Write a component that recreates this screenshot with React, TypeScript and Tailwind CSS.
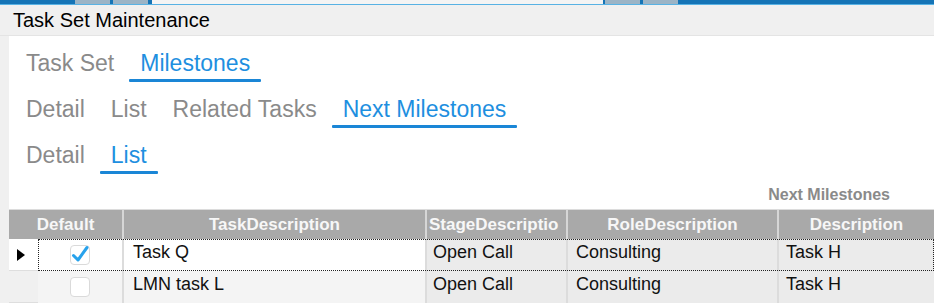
type Row = { def: boolean; task: string; stage: string; role: string; desc: string };

const rows: Row[] = [
  { def: true, task: "Task Q", stage: "Open Call", role: "Consulting", desc: "Task H" },
  { def: false, task: "LMN task L", stage: "Open Call", role: "Consulting", desc: "Task H" },
];

function Tab({ label, active }: { label: string; active?: boolean }) {
  return (
    <div className="flex flex-col px-[11px]">
      <span
        className={
          active
            ? "text-[23px] leading-[26px] text-[#1e8fe0]"
            : "text-[23px] leading-[26px] text-[#8a8a8a]"
        }
      >
        {label}
      </span>
      <span
        className={
          active
            ? "-mx-[11px] mt-[3px] h-[3px] rounded-[1px] bg-[#1a86d6]"
            : "-mx-[11px] mt-[3px] h-[3px]"
        }
      />
    </div>
  );
}

function TabRow({ tabs, active }: { tabs: string[]; active: string }) {
  return (
    <div className="flex gap-[4px]">
      {tabs.map((t) => (
        <Tab key={t} label={t} active={t === active} />
      ))}
    </div>
  );
}

function Check({ checked }: { checked: boolean }) {
  return (
    <div className="flex h-[20px] w-[20px] items-center justify-center rounded-[4px] border-[1.5px] border-[#dadada] bg-white">
      {checked && (
        <svg viewBox="0 0 20 20" className="h-[20px] w-[20px] shrink-0">
          <path
            d="M3.5 10.5 L8 15 L17 2.5"
            fill="none"
            stroke="#27a2ec"
            strokeWidth={3}
            strokeLinecap="round"
            strokeLinejoin="round"
          />
        </svg>
      )}
    </div>
  );
}

function TopStrip() {
  return (
    <div className="flex h-[5px] flex-col bg-[#1574b6]">
      <div className="flex h-[4px]">
        <div className="w-[75px]" />
        <div className="w-[35px] bg-[#9bb4c6]" />
        <div className="w-[3px]" />
        <div className="w-[35px] bg-[#9bb4c6]" />
        <div className="w-[4px]" />
        <div className="w-[451px] bg-[#f4f4f4]" />
        <div className="w-[2px]" />
        <div className="w-[35px] bg-[#9bb4c6]" />
        <div className="w-[3px]" />
        <div className="w-[35px] bg-[#9bb4c6]" />
      </div>
      <div className="h-[1px] bg-[#58b2e4]" />
    </div>
  );
}

export default function App() {
  return (
    <div className="flex h-[303px] w-[934px] flex-col overflow-hidden bg-white font-['Liberation_Sans',Arial,sans-serif]">
      <TopStrip />
      <div className="flex h-[32px] items-center border-b border-[#e4e4e4] bg-[#f0f0f0] pl-[13px] text-[20px] text-black">
        Task Set Maintenance
      </div>
      <div className="flex flex-1">
        <div className="w-[9px] bg-[#f0f0f0]" />
        <div className="flex flex-1 flex-col">
          <div className="flex flex-col gap-[14px] pl-[6px] pt-[14px]">
            <TabRow tabs={["Task Set", "Milestones"]} active="Milestones" />
            <TabRow
              tabs={["Detail", "List", "Related Tasks", "Next Milestones"]}
              active="Next Milestones"
            />
            <TabRow tabs={["Detail", "List"]} active="List" />
          </div>
          <div className="mt-[11px] pr-[44px] text-right text-[16px] font-bold leading-[20px] text-[#8a8a8a]">
            Next Milestones
          </div>
          <div className="mt-[4px] flex flex-col">
            <div className="grid h-[30px] grid-cols-[113px_303px_141px_211px_1fr] border-t border-[#dcdcdc] bg-[#a9a9a9] text-[17px] font-bold text-[#f7f7f7]">
              <div className="flex items-center justify-center">Default</div>
              <div className="flex items-center justify-center border-l-2 border-[#d6d6d6]">
                TaskDescription
              </div>
              <div className="flex items-center overflow-hidden whitespace-nowrap border-l-2 border-[#d6d6d6] pl-[2px]">
                StageDescriptio
              </div>
              <div className="flex items-center justify-center border-l-2 border-[#d6d6d6]">
                RoleDescription
              </div>
              <div className="flex items-center justify-center border-l-2 border-[#d6d6d6]">
                Description
              </div>
            </div>
            {rows.map((r, i) => (
              <div key={r.task} className="flex h-[32px] text-[18px] text-[#111]">
                <div
                  className={
                    i === 0
                      ? "flex w-[29px] items-center border-b border-[#dedede] bg-white pl-[8px]"
                      : "flex w-[29px] items-center border-b border-[#dedede] bg-[#f0f0f0] pl-[8px]"
                  }
                >
                  {i === 0 && (
                    <svg viewBox="0 0 8 12" className="h-[12px] w-[8px]">
                      <path d="M0 0 L8 6 L0 12 Z" fill="#000" />
                    </svg>
                  )}
                </div>
                <div
                  className={
                    i === 0
                      ? "grid flex-1 grid-cols-[84px_303px_141px_211px_1fr] outline-1 -outline-offset-1 outline-dotted outline-[#222]"
                      : "grid flex-1 grid-cols-[84px_303px_141px_211px_1fr] border-b border-[#dedede]"
                  }
                >
                  <div
                    className={
                      i === 0
                        ? "flex items-center justify-center bg-white"
                        : "flex items-center justify-center bg-[#f4f4f4]"
                    }
                  >
                    <Check checked={r.def} />
                  </div>
                  <div
                    className={
                      i === 0
                        ? "flex items-center border-l-2 border-[#dcdcdc] bg-white pb-[5px] pl-[9px]"
                        : "flex items-center border-l-2 border-[#dcdcdc] bg-[#f4f4f4] pb-[5px] pl-[9px]"
                    }
                  >
                    {r.task}
                  </div>
                  <div className="flex items-center border-l-2 border-[#dcdcdc] bg-[#ebebeb] pb-[5px] pl-[6px]">
                    {r.stage}
                  </div>
                  <div className="flex items-center border-l-2 border-[#dcdcdc] bg-[#ebebeb] pb-[5px] pl-[8px]">
                    {r.role}
                  </div>
                  <div className="flex items-center border-l-2 border-[#dcdcdc] bg-[#ebebeb] pb-[5px] pl-[7px]">
                    {r.desc}
                  </div>
                </div>
              </div>
            ))}
          </div>
        </div>
      </div>
    </div>
  );
}
